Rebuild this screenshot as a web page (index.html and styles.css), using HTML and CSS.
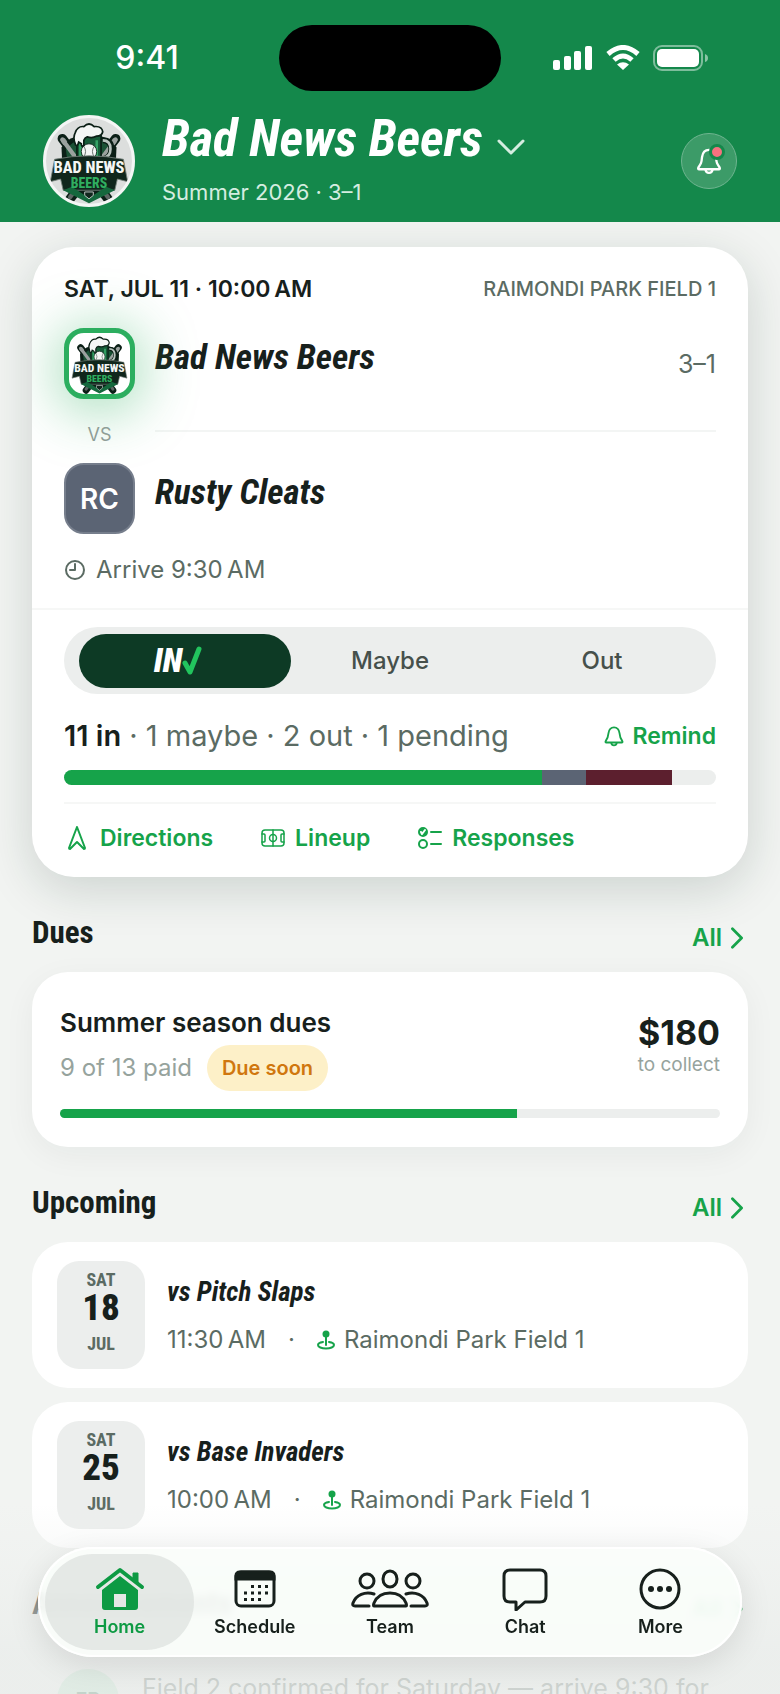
FILE: index.html
```html
<!DOCTYPE html>
<html lang="en">
<head>
    <meta charset="UTF-8">
    <meta name="viewport" content="width=device-width, initial-scale=1.0">
    <title>Bad News Beers</title>
    <link rel="stylesheet" href="styles.css">
</head>
<body>

    <!-- Shared icons -->
    <svg class="icon-defs" aria-hidden="true">
        <symbol id="team-logo" viewBox="0 0 100 100">
            <g stroke-linecap="round">
                <path d="M19 24 72 94M81 24 28 94" stroke="#0b1f16" stroke-width="11"/>
                <path d="M20 26 40 53M80 26 60 53" stroke="#8d9592" stroke-width="6"/>
                <path d="M69 88 72 92M31 88 28 92" stroke="#5d6663" stroke-width="5"/>
            </g>
            <path d="M28 24 50 16 72 24 82 34 80 76 50 97 20 76 18 34Z" fill="#0b1f16"/>
            <path d="M31 29 40 24 40 51 25 51 23 36Z" fill="#1a5235"/>
            <path d="M69 29 62 24 62 51 75 51 77 36Z" fill="#1a5235"/>
            <path d="M19 25 39 52M81 25 61 52" stroke="#9aa19e" stroke-width="5" stroke-linecap="round"/>
            <path d="M36 19h28v34H36z" fill="#175c39" stroke="#0b1f16" stroke-width="2"/>
            <path d="M40 26v25M59 26v25" stroke="#35a466" stroke-width="3"/>
            <path d="M66 26q10 0 10 10t-10 12" fill="none" stroke="#0b1f16" stroke-width="7"/>
            <path d="M66 26q9 0 9 10t-9 10" fill="none" stroke="#b7c2bd" stroke-width="3"/>
            <circle cx="50" cy="39" r="9" fill="#f3f5f4" stroke="#0b1f16" stroke-width="1"/>
            <path d="M44 33q4 6 0 12M56 33q-4 6 0 12" fill="none" stroke="#56605b" stroke-width="1"/>
            <path d="M34 30q-3-7 0-13 3-8 10-7 6-6 12 0 9-1 10 6-1 5-7 5-5 3-11 1-3 1-4 4v6q-3 2-3-2l-3-2-1 3q-3 2-3-1Z" fill="#f4f6f5" stroke="#0b1f16" stroke-width="2"/>
            <path d="M10 48Q50 40 90 48L95 74 83 71 80 84 20 84 17 71 5 74Z" fill="#10261c" stroke="#76817c" stroke-width="1"/>
            <path d="M20 84 30 80 50 93 70 80 80 84 50 99Z" fill="#15683d"/>
            <path d="M45 86h10v4l-5 4-5-4Z" fill="#10261c" stroke="#d5dbd8" stroke-width="1"/>
            <text x="50" y="64" text-anchor="middle" class="logo-word">BAD NEWS</text>
            <text x="50" y="81" text-anchor="middle" class="logo-word logo-word-small">BEERS</text>
        </symbol>
        <symbol id="icon-bell" viewBox="0 0 24 24">
            <path d="M12 2.500c-3.800 0-5.500 2.700-6 6.300-.4 5-1 5.800-3 8.600-.6 1-.3 1.700.6 1.700h16.800c.9 0 1.200-.7.6-1.700-2-2.800-2.600-3.600-3-8.600-.5-3.600-2.200-6.300-6-6.300Z"/>
            <path d="M9 19.500c.3 1.700 1.500 2.700 3 2.700s2.700-1 3-2.700"/>
        </symbol>
        <symbol id="icon-chevron" viewBox="0 0 14 24">
            <path d="M2 2 12 12 2 22"/>
        </symbol>
        <symbol id="icon-pin" viewBox="0 0 18 20">
            <circle cx="9" cy="4" r="3.500" fill="currentColor" stroke="none"/>
            <path d="M9 6v9"/>
            <path d="M6 12c-3 .5-5 1.500-5 3 0 2 3.500 3.500 8 3.500s8-1.500 8-3.500c0-1.500-2-2.500-5-3"/>
        </symbol>
    </svg>

    <div class="app">
        <header class="app-header">
            <div class="status-bar">
                <span class="status-time">9:41</span>
                <div class="island"></div>
                <div class="status-icons">
                    <svg width="40" height="26" viewBox="0 0 40 26" fill="#fff">
                        <rect x="0" y="15" width="7" height="10" rx="2"/>
                        <rect x="11" y="11" width="7" height="14" rx="2"/>
                        <rect x="21" y="6" width="7" height="19" rx="2"/>
                        <rect x="32" y="1" width="7" height="24" rx="2"/>
                    </svg>
                    <svg width="34" height="26" viewBox="0 0 34 26" fill="none" stroke="#fff" stroke-width="5">
                        <path d="M2 9Q17-4 32 9"/>
                        <path d="M8 15Q17 7 26 15"/>
                        <path d="M17 25 11 19.500Q17 15 23 19.500Z" fill="#fff" stroke="none"/>
                    </svg>
                    <svg width="56" height="26" viewBox="0 0 56 26">
                        <rect x="1" y="1" width="48" height="24" rx="8" fill="none" stroke="#fff" stroke-opacity=".45" stroke-width="2"/>
                        <rect x="4" y="4" width="42" height="18" rx="5" fill="#fff"/>
                        <path d="M52 9q3 1 3 4t-3 4Z" fill="#fff" fill-opacity=".5"/>
                    </svg>
                </div>
            </div>

            <div class="team-bar">
                <svg class="team-avatar" viewBox="0 0 100 100" aria-hidden="true"><use href="#team-logo"/></svg>
                <div class="team-info">
                    <button type="button" class="team-switch">
                        <span>Bad News Beers</span>
                        <svg width="28" height="16" viewBox="0 0 28 16" class="stroke-icon"><path d="M2 2 14 14 26 2" stroke-width="3"/></svg>
                    </button>
                    <p class="team-season">Summer 2026 · 3–1</p>
                </div>
                <button type="button" class="bell-button" aria-label="Notifications">
                    <svg width="28" height="30" viewBox="0 0 24 24" class="stroke-icon"><use href="#icon-bell"/></svg>
                    <span class="bell-dot"></span>
                </button>
            </div>
        </header>

        <main class="content">
            <section class="card game-card">
                <div class="game-top">
                    <div class="game-meta">
                        <strong>SAT, JUL 11 · 10:00&#8239;AM</strong>
                        <span>RAIMONDI PARK FIELD 1</span>
                    </div>
                    <div class="matchup">
                        <div class="badge badge-home">
                            <svg viewBox="0 0 100 100" width="61" height="61" aria-hidden="true"><use href="#team-logo"/></svg>
                        </div>
                        <div class="opponent">
                            <h2>Bad News Beers</h2>
                            <span class="record">3–1</span>
                        </div>
                        <span class="versus">VS</span>
                        <hr class="versus-line">
                        <div class="badge badge-away">RC</div>
                        <div class="opponent">
                            <h2>Rusty Cleats</h2>
                        </div>
                    </div>
                    <p class="arrive">
                        <svg width="22" height="22" viewBox="0 0 22 22" class="stroke-icon"><circle cx="11" cy="11" r="9"/><path d="M11 5v6H6"/></svg>
                        Arrive 9:30&#8239;AM
                    </p>
                </div>

                <div class="game-bottom">
                    <fieldset class="rsvp">
                        <legend class="visually-hidden">RSVP</legend>
                        <label class="rsvp-option">
                            <input type="radio" name="rsvp" value="in" checked>
                            <span class="rsvp-in">IN<svg width="20" height="30" viewBox="0 0 20 30"><path d="M3 17 8 26 17 3" fill="none" stroke="#22c55e" stroke-width="5" stroke-linecap="round" stroke-linejoin="round"/></svg></span>
                        </label>
                        <label class="rsvp-option">
                            <input type="radio" name="rsvp" value="maybe">
                            <span>Maybe</span>
                        </label>
                        <label class="rsvp-option">
                            <input type="radio" name="rsvp" value="out">
                            <span>Out</span>
                        </label>
                    </fieldset>

                    <div class="counts">
                        <p><strong>11 in</strong> · 1 maybe · 2 out · 1 pending</p>
                        <button type="button" class="text-action">
                            <svg width="22" height="22" class="stroke-icon"><use href="#icon-bell"/></svg>
                            Remind
                        </button>
                    </div>
                    <div class="bar bar-large">
                        <span class="bar-in" style="width: 73.3%"></span>
                        <span class="bar-maybe" style="width: 6.7%"></span>
                        <span class="bar-out" style="width: 13.3%"></span>
                    </div>

                    <div class="game-links">
                        <a href="#directions" class="text-action">
                            <svg width="26" height="26" viewBox="0 0 26 26" class="stroke-icon"><path d="M13 2 5 23c0 1 1 1 1 1l7-7 7 7s1 0 1-1Z"/></svg>
                            Directions
                        </a>
                        <a href="#lineup" class="text-action">
                            <svg width="24" height="20" viewBox="0 0 24 20" class="stroke-icon thin"><rect x="1" y="2" width="22" height="16" rx="3"/><path d="M12 2v16M1 6h2q1 0 1 1v6q0 1-1 1H1M23 6h-2q-1 0-1 1v6q0 1 1 1h2"/><circle cx="12" cy="10" r="3.500"/></svg>
                            Lineup
                        </a>
                        <a href="#responses" class="text-action">
                            <svg width="24" height="24" viewBox="0 0 24 24" class="stroke-icon"><circle cx="5" cy="6" r="4" fill="currentColor"/><path d="M3 6l1 2 3-4" stroke="#fff"/><circle cx="5" cy="18" r="4"/><path d="M13 6h10M13 18h10"/></svg>
                            Responses
                        </a>
                    </div>
                </div>
            </section>

            <section>
                <div class="section-head">
                    <h2>Dues</h2>
                    <a href="#dues" class="text-action">All <svg width="14" height="22" class="stroke-icon heavy"><use href="#icon-chevron"/></svg></a>
                </div>
                <div class="card dues-card">
                    <div class="dues-row">
                        <div>
                            <h3>Summer season dues</h3>
                            <p class="dues-status">9 of 13 paid <span class="pill">Due soon</span></p>
                        </div>
                        <div class="dues-amount">
                            <strong>$180</strong>
                            <span>to collect</span>
                        </div>
                    </div>
                    <div class="bar"><span class="bar-in" style="width: 69.2%"></span></div>
                </div>
            </section>

            <section>
                <div class="section-head">
                    <h2>Upcoming</h2>
                    <a href="#schedule" class="text-action">All <svg width="14" height="22" class="stroke-icon heavy"><use href="#icon-chevron"/></svg></a>
                </div>
                <div class="game-list">
                    <article class="card game-row">
                        <time class="date" datetime="2026-07-18"><span>SAT</span><b>18</b><span>JUL</span></time>
                        <div>
                            <h3>vs Pitch Slaps</h3>
                            <p class="game-where">11:30&#8239;AM <i>·</i> <svg width="18" height="20" class="stroke-icon"><use href="#icon-pin"/></svg> Raimondi Park Field 1</p>
                        </div>
                    </article>
                    <article class="card game-row">
                        <time class="date" datetime="2026-07-25"><span>SAT</span><b>25</b><span>JUL</span></time>
                        <div>
                            <h3>vs Base Invaders</h3>
                            <p class="game-where">10:00&#8239;AM <i>·</i> <svg width="18" height="20" class="stroke-icon"><use href="#icon-pin"/></svg> Raimondi Park Field 1</p>
                        </div>
                    </article>
                </div>
            </section>

            <section>
                <div class="section-head">
                    <h2>Announcements</h2>
                    <a href="#announcements" class="text-action">All <svg width="14" height="22" class="stroke-icon heavy"><use href="#icon-chevron"/></svg></a>
                </div>
                <div class="announcement">
                    <span class="initials">FB</span>
                    <p>Field 2 confirmed for Saturday — arrive 9:30 for</p>
                </div>
            </section>
        </main>

        <div class="bottom-fade"></div>

        <nav class="tab-bar" aria-label="Main">
            <a href="#home" class="tab active">
                <svg width="50" height="44" viewBox="0 0 50 44">
                    <path d="M3 20 25 3 47 20" fill="none" stroke="currentColor" stroke-width="4" stroke-linecap="round" stroke-linejoin="round"/>
                    <path d="M38 12V6h5v10Z" fill="currentColor" stroke="currentColor"/>
                    <path fill-rule="evenodd" d="M25 9 43 23v17q0 3-3 3H10q-3 0-3-3V23ZM19 27v13h12V27Z" fill="currentColor"/>
                </svg>
                Home
            </a>
            <a href="#schedule" class="tab">
                <svg width="42" height="44" viewBox="0 0 42 44" fill="none" stroke="currentColor" stroke-width="3">
                    <rect x="2" y="5" width="38" height="34" rx="5"/>
                    <path d="M2 12V9q0-4 4-4h30q4 0 4 4v3Z" fill="currentColor"/>
                    <path d="M17 19.500h18M10 26h25M10 32.500h18" stroke-dasharray="3 4"/>
                </svg>
                Schedule
            </a>
            <a href="#team" class="tab">
                <svg width="78" height="44" viewBox="0 0 78 44" fill="none" stroke="currentColor" stroke-width="3" stroke-linejoin="round" stroke-linecap="round">
                    <ellipse cx="39" cy="12" rx="7" ry="8"/>
                    <ellipse cx="16" cy="14" rx="7" ry="7"/>
                    <ellipse cx="62" cy="14" rx="7" ry="7"/>
                    <path d="M23 39Q22 39 23 36C26 29 31 26 39 26s13 3 16 10q1 3 0 3Z"/>
                    <path d="M18 39H4q-3 0-2-3C5 28 14 24 23 27M60 39h14q3 0 2-3C73 28 64 24 55 27"/>
                </svg>
                Team
            </a>
            <a href="#chat" class="tab">
                <svg width="46" height="44" viewBox="0 0 46 44" fill="none" stroke="currentColor" stroke-width="3" stroke-linejoin="round">
                    <path d="M8 3h30q6 0 6 6v20q0 6-6 6H23l-9 8v-8H8q-6 0-6-6V9q0-6 6-6Z"/>
                </svg>
                Chat
            </a>
            <a href="#more" class="tab">
                <svg width="44" height="44" viewBox="0 0 44 44">
                    <circle cx="22" cy="22" r="19" fill="none" stroke="currentColor" stroke-width="3"/>
                    <g fill="currentColor"><circle cx="13" cy="22" r="3"/><circle cx="22" cy="22" r="3"/><circle cx="31" cy="22" r="3"/></g>
                </svg>
                More
            </a>
        </nav>
    </div>

</body>
</html>
```
FILE: styles.css
```css
* {
    box-sizing: border-box;
}

body {
    margin: 0;
    font-family: Inter, "Liberation Sans", sans-serif;
    font-size: 24px;
    line-height: 32px;
    color: #17201c;
    background-color: #f2f4f2;
}

h1, h2, h3, p {
    margin: 0;
}

h2, h3, .team-switch, .date, .rsvp-in {
    font-family: "Roboto Condensed", "Liberation Sans Narrow", "Liberation Sans", sans-serif;
    font-weight: bold;
}

button {
    font: inherit;
    color: inherit;
    background: none;
    border: none;
    padding: 0;
    cursor: pointer;
}

a {
    color: inherit;
    text-decoration: none;
}

svg {
    display: block;
    flex: none;
}

.icon-defs {
    position: absolute;
    width: 0;
    height: 0;
}

.visually-hidden, .rsvp input {
    position: absolute;
    opacity: 0;
}

.stroke-icon {
    fill: none;
    stroke: currentColor;
    stroke-width: 2;
    stroke-linecap: round;
    stroke-linejoin: round;
}

.stroke-icon.thin {
    stroke-width: 1.5;
}

.stroke-icon.heavy {
    stroke-width: 3;
}

.logo-word {
    font-family: "Roboto Condensed", "Liberation Sans", sans-serif;
    font-size: 19px;
    font-weight: 800;
    fill: #f4f6f5;
}

.logo-word-small {
    font-size: 16px;
    fill: #2fae60;
}

/* App shell */
.app {
    position: relative;
    height: 100vh;
    display: flex;
    flex-direction: column;
    overflow: hidden;
}

.app-header {
    flex: none;
    padding: 25px 43px 14px;
    color: #fff;
    background-color: #14884b;
}

.status-bar {
    display: grid;
    grid-template-columns: 1fr 222px 1fr;
    align-items: center;
    margin-bottom: 22px;
}

.status-time {
    justify-self: center;
    padding-right: 28px;
    font-size: 32px;
    font-weight: 500;
}

.island {
    height: 66px;
    border-radius: 33px;
    background-color: #000;
}

.status-icons {
    display: flex;
    gap: 13px;
    justify-content: flex-end;
    padding-right: 28px;
}

.team-bar {
    display: flex;
    align-items: center;
    gap: 27px;
}

.team-avatar {
    width: 92px;
    height: 92px;
    border: 3px solid #f4f6f5;
    border-radius: 50%;
    background-color: #dcdedd;
}

.team-info {
    flex: 1;
}

.team-switch {
    display: flex;
    align-items: center;
    gap: 14px;
    font-size: 51px;
    font-style: italic;
    line-height: 52px;
}

.team-switch svg {
    margin-top: 16px;
    color: #d5ede0;
}

.team-season {
    margin-top: 11px;
    font-size: 22px;
    color: #d5ede0;
}

.bell-button {
    position: relative;
    display: grid;
    place-items: center;
    width: 56px;
    height: 56px;
    border: 1px solid #6fb590;
    border-radius: 50%;
    background-color: #3c9b68;
}

.bell-dot {
    position: absolute;
    top: 10px;
    right: 11px;
    width: 16px;
    height: 16px;
    border: 3px solid #14884b;
    border-radius: 50%;
    background-color: #f7717f;
}

.content {
    flex: 1;
    padding: 25px 32px 0;
    overflow: hidden;
}

.card {
    border-radius: 36px;
    background-color: #fff;
    box-shadow: 0 8px 32px rgba(20, 40, 30, 0.05);
}

.text-action {
    display: flex;
    align-items: center;
    gap: 8px;
    font-weight: 600;
    color: #16a34a;
}

/* Next game */
.game-card {
    border-radius: 42px;
    box-shadow: 0 12px 48px rgba(20, 50, 35, 0.17);
    overflow: hidden;
}

.game-top {
    padding: 26px 32px 22px;
}

.game-meta {
    display: flex;
    justify-content: space-between;
    margin-bottom: 23px;
    color: #5b6b63;
    font-size: 20px;
    font-weight: 500;
}

.game-meta strong {
    font-size: 23px;
    font-weight: 600;
    color: #17201c;
}

.matchup {
    display: grid;
    grid-template-columns: 71px 1fr;
    column-gap: 20px;
    align-items: center;
}

.badge {
    position: relative;
    display: grid;
    place-items: center;
    width: 71px;
    height: 71px;
    border-radius: 20px;
}

.badge-home {
    border: 5px solid #2cae5f;
    background-color: #fff;
    box-shadow: 0 6px 56px 6px rgba(34, 170, 84, 0.4);
}

.badge-away {
    border: 2px solid #767e8c;
    background-color: #5b6474;
    color: #fff;
    font-size: 28px;
    font-weight: 600;
}

.opponent {
    display: flex;
    justify-content: space-between;
    align-items: center;
}

.opponent h2 {
    padding-bottom: 12px;
    font-size: 35px;
    font-style: italic;
    line-height: 40px;
}

.record {
    font-size: 25px;
    color: #5b6b63;
}

.versus {
    position: relative;
    padding: 20px 0 12px;
    text-align: center;
    font-size: 18px;
    color: #8f9e97;
}

.versus-line {
    width: 100%;
    margin: 0;
    border: 0;
    border-top: 2px solid #f3f5f4;
}

.arrive {
    display: flex;
    align-items: center;
    gap: 10px;
    margin-top: 20px;
    color: #5b6b63;
}

.game-bottom {
    padding: 17px 32px 23px;
    border-top: 2px solid #f6f7f6;
}

.rsvp {
    display: flex;
    min-width: 0;
    margin: 0;
    padding: 7px 8px 6px;
    border: 0;
    border-radius: 34px;
    background-color: #eceeed;
}

.rsvp-option {
    position: relative;
    flex: 1;
    display: flex;
    align-items: center;
    justify-content: center;
    height: 54px;
    font-weight: 500;
    color: #46504b;
    cursor: pointer;
}

.rsvp-option span {
    position: relative;
}

.rsvp-option:has(input:checked)::before {
    content: "";
    position: absolute;
    inset: 0 -7px 0 7px;
    border-radius: 27px;
    background-color: #0d3a25;
}

.rsvp-in {
    display: flex;
    align-items: center;
    font-size: 33px;
    font-style: italic;
    font-weight: 900;
    color: #fff;
}

.counts {
    display: flex;
    justify-content: space-between;
    margin-top: 26px;
    font-size: 29px;
    color: #5b6b63;
}

.counts strong {
    font-weight: 600;
    color: #17201c;
}

.counts .text-action {
    font-size: 23px;
}

.bar {
    display: flex;
    height: 9px;
    border-radius: 8px;
    background-color: #eceeed;
    overflow: hidden;
}

.bar-large {
    height: 15px;
    margin: 18px 0 17px;
}

.bar-in {
    background-color: #16a34a;
}

.bar-maybe {
    background-color: #5b6474;
}

.bar-out {
    background-color: #5c1f2e;
}

.game-links {
    display: flex;
    gap: 48px;
    padding-top: 18px;
    border-top: 2px solid #f6f7f6;
    font-size: 23px;
}

.game-links .text-action {
    gap: 10px;
}

/* Sections */
.section-head {
    display: flex;
    justify-content: space-between;
    align-items: flex-start;
    padding: 37px 4px 18px 0;
}

.section-head h2 {
    font-size: 31px;
    line-height: 38px;
}

.section-head .text-action {
    margin-top: 8px;
}

.dues-card {
    padding: 34px 28px 29px;
}

.dues-row {
    display: flex;
    justify-content: space-between;
    align-items: center;
    margin-bottom: 18px;
}

.dues-card h3 {
    font-family: inherit;
    font-size: 26px;
    font-weight: 600;
    line-height: 34px;
}

.dues-status {
    display: flex;
    align-items: center;
    gap: 15px;
    margin-top: 5px;
    color: #96a39d;
}

.pill {
    padding: 7px 15px;
    border-radius: 24px;
    font-size: 20px;
    font-weight: 600;
    color: #d0770f;
    background-color: #fdf0c8;
}

.dues-amount {
    display: flex;
    flex-direction: column;
    text-align: right;
}

.dues-amount strong {
    font-size: 34px;
    font-weight: 700;
}

.dues-amount span {
    font-size: 19px;
    color: #96a39d;
}

.game-list {
    display: grid;
    gap: 14px;
}

.game-row {
    display: flex;
    align-items: center;
    gap: 22px;
    padding: 19px 25px;
    box-shadow: none;
}

.date {
    display: flex;
    flex-direction: column;
    align-items: center;
    width: 88px;
    height: 108px;
    padding-top: 9px;
    border-radius: 22px;
    background-color: #eceeed;
}

.date span {
    font-size: 18px;
    line-height: 20px;
    color: #5b6b63;
}

.date b {
    margin-bottom: 8px;
    font-size: 37px;
    font-weight: 800;
    line-height: 36px;
}

.game-row h3 {
    margin-bottom: 15px;
    font-size: 27px;
    font-style: italic;
    line-height: 34px;
}

.game-where {
    display: flex;
    align-items: center;
    gap: 9px;
    color: #5b6b63;
}

.game-where i {
    margin: 0 13px;
    font-style: normal;
}

.game-where svg {
    color: #16a34a;
}

.announcement {
    display: flex;
    gap: 23px;
    padding: 26px 25px;
    font-size: 25px;
    white-space: nowrap;
}

.announcement p {
    padding-top: 3px;
    color: #5b6b63;
}

.initials {
    flex: none;
    width: 62px;
    height: 62px;
    border-radius: 50%;
    text-align: center;
    font-size: 20px;
    line-height: 62px;
    font-weight: 600;
    color: #2b6b48;
    background-color: #b9e6ca;
}

/* Floating tab bar */
.bottom-fade {
    position: absolute;
    inset: auto 0 0;
    height: 190px;
    background: linear-gradient(rgba(236, 239, 237, 0), rgba(236, 239, 237, 0.35) 30%, rgba(234, 237, 235, 0.8) 80%);
    pointer-events: none;
}

.tab-bar {
    position: absolute;
    inset: auto 38px 37px;
    display: grid;
    grid-template-columns: repeat(5, 1fr);
    padding: 7px 14px;
    border-radius: 55px;
    background-color: rgba(251, 254, 251, 0.88);
    box-shadow: 0 8px 32px rgba(0, 0, 0, 0.1), inset 0 0 0 2px #fff;
    backdrop-filter: blur(4px);
}

.tab {
    display: flex;
    flex-direction: column;
    align-items: center;
    gap: 2px;
    height: 96px;
    padding-top: 13px;
    border-radius: 48px;
    font-size: 18px;
    font-weight: 600;
    line-height: 28px;
    color: #17201c;
}

.tab.active {
    margin: 0 -7px;
    color: #0d9a43;
    background-color: rgba(222, 226, 223, 0.75);
}
```
